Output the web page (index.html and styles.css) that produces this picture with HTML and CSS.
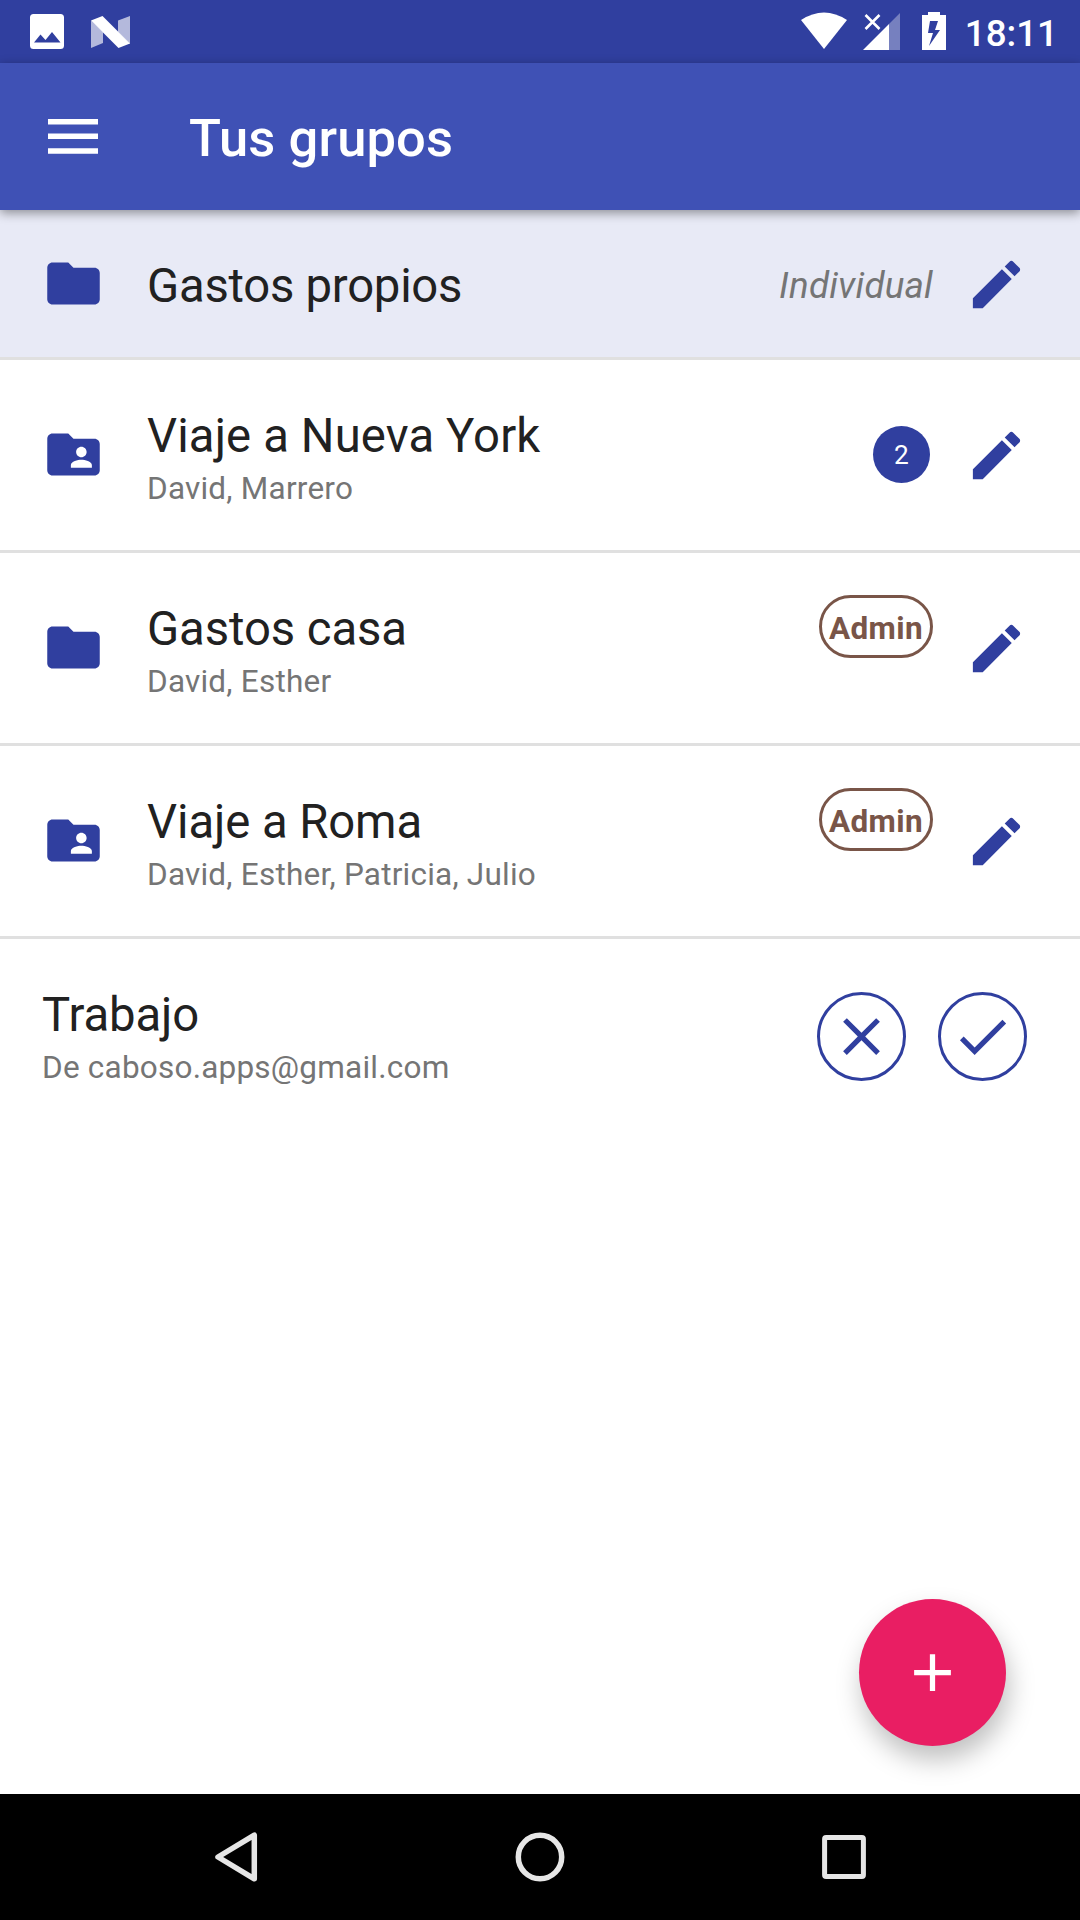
FILE: index.html
```html
<!DOCTYPE html>
<html lang="es">
<head>
<meta charset="utf-8">
<title>Tus grupos</title>
<link rel="stylesheet" href="styles.css">
</head>
<body>
<svg class="symbols" aria-hidden="true">
  <symbol id="folder" viewBox="0 0 24 24"><path d="M10 4H4c-1.100 0-1.990.9-1.990 2L2 18c0 1.100.9 2 2 2h16c1.100 0 2-.9 2-2V8c0-1.100-.9-2-2-2h-8l-2-2z"/></symbol>
  <symbol id="folder-shared" viewBox="0 0 24 24"><path d="M20 6h-8l-2-2H4c-1.100 0-1.990.9-1.990 2L2 18c0 1.100.9 2 2 2h16c1.100 0 2-.9 2-2V8c0-1.100-.9-2-2-2zm-5 3c1.100 0 2 .9 2 2s-.9 2-2 2-2-.9-2-2 .9-2 2-2zm4 8h-8v-1c0-1.330 2.670-2 4-2s4 .67 4 2v1z"/></symbol>
  <symbol id="edit" viewBox="0 0 24 24"><path d="M3 17.250V21h3.750L17.810 9.940l-3.750-3.750L3 17.250zM20.710 7.040c.39-.39.39-1.020 0-1.410l-2.340-2.340c-.39-.39-1.020-.39-1.410 0l-1.830 1.830 3.750 3.750 1.830-1.830z"/></symbol>
</svg>
<div class="screen">
  <header class="status">
    <div class="status-left">
      <svg class="s-image" viewBox="0 0 34 35"><path fill-rule="evenodd" d="M3.500 0H30.500a3.500 3.500 0 0 1 3.500 3.500V31.500a3.500 3.500 0 0 1-3.500 3.500H3.500a3.500 3.500 0 0 1-3.500-3.500V3.500a3.500 3.500 0 0 1 3.500-3.500ZM4 28.500H30.500L22 18 15.500 26 10.500 20.500Z"/></svg>
      <svg class="s-n" viewBox="0 0 39 32"><path opacity=".64" d="M0 4.500 12 16V27L0 32ZM27 4.500 39 0V28L27 16Z"/><path d="M0 4.500 11.500 0 39 27.500 27.500 32Z"/></svg>
    </div>
    <div class="status-right">
      <svg class="s-wifi" viewBox="0 0 46 37"><path d="M0 8Q23-7 46 8L23 37Z"/></svg>
      <svg class="s-cell" viewBox="0 0 37 37"><path opacity=".34" d="M26 11 37 0V37H26Z"/><path d="M0 37 26 11V37Z"/><path class="cross" d="M2.500 2 16.500 16M16.500 2 2.500 16"/></svg>
      <svg class="s-battery" viewBox="0 0 24 38"><path fill-rule="evenodd" d="M6 0H18V3H24V38H0V3H6ZM8 9 6 21H11L7 34 18 18H13L16 9Z"/></svg>
      <span class="clock">18:11</span>
    </div>
  </header>
  <div class="toolbar">
    <svg class="menu" viewBox="0 0 50 35"><path d="M0 0H50V5.500H0ZM0 14.600H50V20.100H0ZM0 29.200H50V34.700H0Z"/></svg>
    <h1 class="heading">Tus grupos</h1>
  </div>
  <main class="list">
    <section class="row row-own">
      <svg class="icon"><use href="#folder"/></svg>
      <div class="info"><h2 class="name name-tight">Gastos propios</h2></div>
      <span class="kind">Individual</span>
      <svg class="icon edit"><use href="#edit"/></svg>
    </section>
    <section class="row">
      <svg class="icon folder"><use href="#folder-shared"/></svg>
      <div class="info"><h2 class="name name-wide">Viaje a Nueva York</h2><p class="people">David, Marrero</p></div>
      <span class="count">2</span>
      <svg class="icon"><use href="#edit"/></svg>
    </section>
    <section class="row">
      <svg class="icon folder"><use href="#folder"/></svg>
      <div class="info"><h2 class="name">Gastos casa</h2><p class="people">David, Esther</p></div>
      <span class="role">Admin</span>
      <svg class="icon"><use href="#edit"/></svg>
    </section>
    <section class="row">
      <svg class="icon folder"><use href="#folder-shared"/></svg>
      <div class="info"><h2 class="name">Viaje a Roma</h2><p class="people">David, Esther, Patricia, Julio</p></div>
      <span class="role">Admin</span>
      <svg class="icon"><use href="#edit"/></svg>
    </section>
    <section class="row row-invite">
      <div class="info"><h2 class="name">Trabajo</h2><p class="people">De caboso.apps@gmail.com</p></div>
      <div class="answers">
        <span class="round"><svg class="icon" viewBox="0 0 24 24"><path d="M19 6.410L17.590 5 12 10.590 6.410 5 5 6.410 10.590 12 5 17.590 6.410 19 12 13.410 17.590 19 19 17.590 13.410 12z"/></svg></span>
        <span class="round"><svg class="icon" viewBox="0 0 24 24"><path d="M9 16.170L4.830 12l-1.420 1.410L9 19 21 7l-1.410-1.410z"/></svg></span>
      </div>
    </section>
    <div class="fab"><svg viewBox="0 0 24 24"><path d="M19 13h-6v6h-2v-6H5v-2h6V5h2v6h6v2z"/></svg></div>
  </main>
  <nav class="nav">
    <svg viewBox="0 0 64 64"><path d="M50.300 10.200V53.800L14 32Z"/></svg>
    <svg viewBox="0 0 64 64"><circle cx="32" cy="32" r="21.700"/></svg>
    <svg viewBox="0 0 64 64"><rect class="recents" x="12.600" y="12.600" width="38.800" height="38.800" rx="1.500"/></svg>
  </nav>
</div>
</body>
</html>
```
FILE: styles.css
```css
* { box-sizing: border-box; margin: 0; }
body { font-family: Roboto, "Noto Sans", sans-serif; background: #fff; }
svg { display: block; flex: none; }
.symbols { position: absolute; width: 0; height: 0; }
.screen { width: 1080px; height: 1920px; display: flex; flex-direction: column; overflow: hidden; }

.status { height: 63px; background: #303f9f; display: flex; justify-content: space-between; padding: 0 22px 0 30px; fill: #fff; }
.status-left, .status-right { display: flex; align-items: flex-start; }
.s-image { width: 34px; height: 35px; margin-top: 14px; }
.s-n { width: 39px; height: 32px; margin: 16px 0 0 27px; }
.s-wifi { width: 46px; height: 37px; margin-top: 12px; }
.s-cell { width: 37px; height: 37px; margin: 13px 0 0 16px; }
.cross { fill: none; stroke: #fff; stroke-width: 2.600; }
.s-battery { width: 24px; height: 38px; margin: 12px 19px 0 22px; }
.clock { color: #fff; font-size: 36.750px; font-weight: 500; line-height: 43px; margin-top: 12px; }

.toolbar { height: 147px; background: #3f51b5; display: flex; align-items: center; padding-left: 48px; box-shadow: 0 3px 10px rgba(0,0,0,.4); position: relative; z-index: 1; }
.menu { width: 50px; height: 35px; fill: #fff; margin-bottom: 1px; }
.heading { color: #fff; font-size: 52.500px; font-weight: 500; line-height: 62px; letter-spacing: .12px; margin-left: 91px; padding-top: 3px; }

.list { flex: 1; position: relative; }
.row { height: 193px; border-bottom: 3px solid #e0e0e0; display: flex; align-items: center; padding: 0 52px 0 42px; }
.row-own { height: 150px; background: #e8eaf6; }
.icon { width: 63px; height: 63px; fill: #303f9f; }
.folder { margin-bottom: 1px; }
.edit { margin-top: 2px; }
.info { flex: 1; margin-left: 42px; padding-top: 6px; }
.name { font-size: 47.250px; font-weight: 400; line-height: 55px; color: #212121; letter-spacing: -.08px; }
.name-tight { letter-spacing: -.25px; }
.name-wide { letter-spacing: .13px; }
.people { font-size: 31.500px; line-height: 37px; color: #757575; letter-spacing: .22px; margin-top: 6px; }
.kind { font-size: 36.750px; font-style: italic; color: #757575; letter-spacing: .2px; margin: 3px 32px 0 0; }
.count { width: 57px; height: 57px; border-radius: 50%; background: #303f9f; color: #fff; font-size: 26.250px; line-height: 59px; text-align: center; margin: 0 35px 1px 0; }
.role { align-self: flex-start; width: 114px; height: 63px; margin: 42px 32px 0 0; border: 3px solid #795548; border-radius: 32px; color: #795548; font-size: 31.500px; font-weight: 700; line-height: 61px; letter-spacing: .4px; text-align: center; }
.row-invite { border-bottom-color: transparent; padding-right: 53px; }
.row-invite .info { margin-left: 0; }
.answers { display: flex; gap: 32px; margin-top: 5px; }
.round { width: 89px; height: 89px; border: 3px solid #303f9f; border-radius: 50%; display: flex; align-items: center; justify-content: center; }

.fab { position: absolute; right: 74px; bottom: 48px; width: 147px; height: 147px; border-radius: 50%; background: #e91e63; display: flex; align-items: center; justify-content: center; box-shadow: 3px 14px 26px rgba(0,0,0,.25); }
.fab svg { width: 63px; height: 63px; fill: #fff; }

.nav { height: 126px; background: #000; display: flex; justify-content: center; align-items: center; gap: 240px; }
.nav svg { width: 64px; height: 64px; fill: none; stroke: #e6e6e6; stroke-width: 5.500; stroke-linejoin: round; }
.nav .recents { stroke-width: 5; }
```
